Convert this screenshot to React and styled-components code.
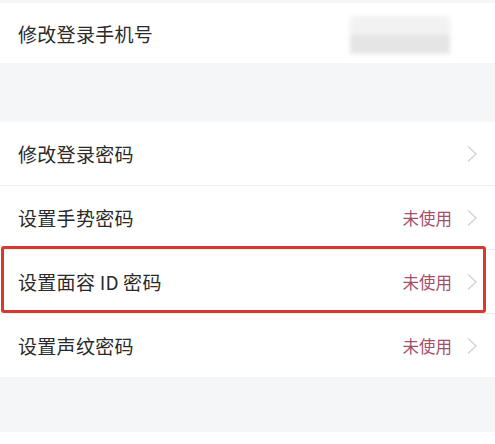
import styled, { createGlobalStyle } from 'styled-components';

const GlobalStyle = createGlobalStyle`
  html, body {
    margin: 0;
    padding: 0;
    background: #ffffff;
  }
  body {
    font-family: "Noto Sans CJK SC", "Noto Sans", sans-serif;
    width: 495px;
    height: 444px;
    overflow: hidden;
  }
`;

const Page = styled.div`
  display: flex;
  flex-direction: column;
  background: #f5f6f8;
  padding-top: 3px;
`;

const Group = styled.div`
  display: flex;
  flex-direction: column;
  background: #ffffff;
  margin-bottom: ${(p) => p.$gap}px;
`;

const Row = styled.div`
  position: relative;
  display: flex;
  align-items: center;
  height: ${(p) => p.$h || 64}px;
  padding: 0 17px 0 18px;
  border-top: ${(p) => (p.$divider ? '1px solid #f0f0f0' : 'none')};
  box-sizing: border-box;

  ${(p) =>
    p.$marked &&
    `
    &::after {
      content: '';
      position: absolute;
      top: -4px;
      bottom: 0;
      left: 1px;
      right: 9px;
      border: 3px solid #d8392f;
      border-radius: 3px;
      pointer-events: none;
    }
  `}
`;

const Label = styled.span`
  flex: 1;
  font-size: 19px;
  color: #2a2a2a;
  letter-spacing: 0.3px;
`;

const Status = styled.span`
  font-size: 16.5px;
  color: #a24f6c;
  margin-right: 14px;
`;

const Masked = styled.div`
  width: 100px;
  height: 38px;
  margin-right: 28px;
  margin-top: 4px;
  background: linear-gradient(180deg, #f2f2f2 0%, #f2f2f2 48%, #e4e4e4 52%, #e6e6e6 100%);
  filter: blur(2px);
`;

const Chevron = () => (
  <svg width="12" height="18" viewBox="0 0 12 18" fill="none">
    <path
      d="M2 1.5 L10 9 L2 16.5"
      stroke="#d2d2d2"
      strokeWidth="1.3"
      strokeLinejoin="round"
    />
  </svg>
);

const Bottom = styled.div`
  height: 12px;
  background: #ffffff;
  margin-top: 55px;
`;

const rows = [
  { label: '修改登录密码' },
  { label: '设置手势密码', status: '未使用' },
  { label: '设置面容 ID\u2009密码', status: '未使用', marked: true },
  { label: '设置声纹密码', status: '未使用' },
];

export default function App() {
  return (
    <>
      <GlobalStyle />
      <Page>
        <Group $gap={59}>
          <Row $h={60}>
            <Label>修改登录手机号</Label>
            <Masked />
          </Row>
        </Group>
        <Group $gap={0}>
          {rows.map((r, i) => (
            <Row key={r.label} $divider={i > 0} $marked={r.marked} $h={i === 0 ? 63 : 64}>
              <Label>{r.label}</Label>
              {r.status && <Status>{r.status}</Status>}
              <Chevron />
            </Row>
          ))}
        </Group>
        <Bottom />
      </Page>
    </>
  );
}
